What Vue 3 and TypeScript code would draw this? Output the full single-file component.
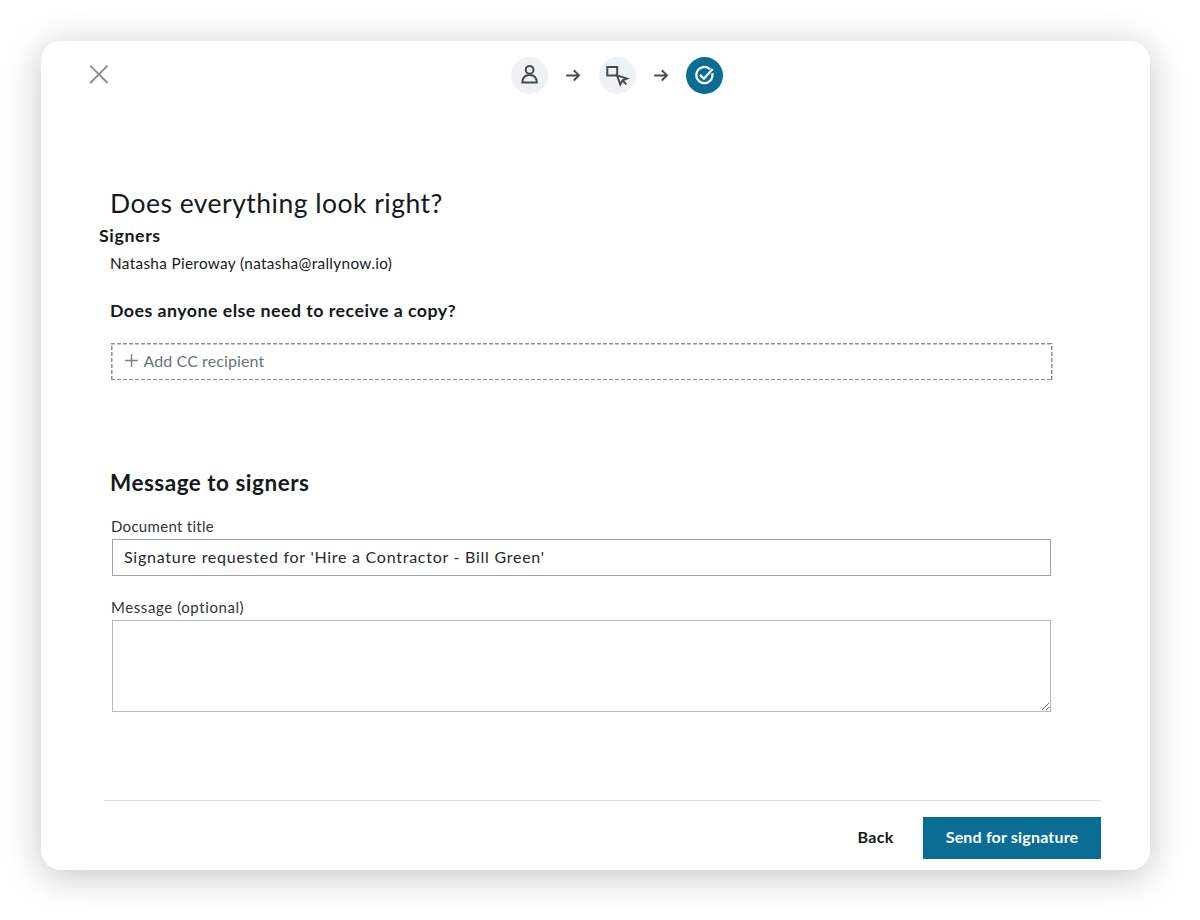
<script setup lang="ts">
import { ref } from 'vue'

const signers = ref([{ name: 'Natasha Pieroway', email: 'natasha@rallynow.io' }])
const documentTitle = ref("Signature requested for 'Hire a Contractor - Bill Green'")
const message = ref('')
</script>

<template>
  <div class="page">
    <main class="dialog">
      <header class="topbar">
        <button class="close" aria-label="Close">
          <svg width="20" height="20" viewBox="0 0 20 20"><path d="M1.2 1.6 18.6 19M18.6 1.6 1.2 19" /></svg>
        </button>
        <div class="steps">
          <span class="step">
            <svg width="37" height="37" viewBox="0 0 37 37">
              <circle cx="18.6" cy="12.8" r="3.9" />
              <path d="M11.4 25.6C11.4 20.6 14.2 17.9 18.6 17.9S25.8 20.6 25.8 25.6Z" />
            </svg>
          </span>
          <svg class="arrow" width="14" height="14" viewBox="0 0 14 14"><path d="M.2 7.4H13M7.8 2.3 13 7.4 7.8 12.5" /></svg>
          <span class="step">
            <svg width="37" height="37" viewBox="0 0 37 37">
              <path d="M18.2 18.5H8.3V10H18.2V18.5Z" />
              <path d="M18 18.4 28 21.6 23.6 23.4 21.3 27.4ZM23.6 23.4 27.3 27.4" />
            </svg>
          </span>
          <svg class="arrow" width="14" height="14" viewBox="0 0 14 14"><path d="M.2 7.4H13M7.8 2.3 13 7.4 7.8 12.5" /></svg>
          <span class="step active">
            <svg width="37" height="37" viewBox="0 0 37 37">
              <path d="M24 12.2A8.1 8.1 0 1 0 26.3 16.3" />
              <path d="M14.1 17.9 17.9 21.7 26.6 11.9" />
            </svg>
          </span>
        </div>
      </header>

      <section class="content">
        <h1>Does everything look right?</h1>
        <h3 class="signers-title">Signers</h3>
        <p v-for="s in signers" :key="s.email" class="signer">{{ s.name }} ({{ s.email }})</p>
        <h3 class="copy-title">Does anyone else need to receive a copy?</h3>
        <button class="add-cc">
          <svg width="13" height="13" viewBox="0 0 13 13"><path d="M6.5 0V13M0 6.5H13" /></svg>
          <span>Add CC recipient</span>
        </button>
        <h2>Message to signers</h2>
        <div class="fields">
          <label class="title-label" for="title">Document title</label>
          <input id="title" v-model="documentTitle" type="text" />
          <label class="message-label" for="message">Message (optional)</label>
          <textarea id="message" v-model="message"></textarea>
        </div>
      </section>

      <footer>
        <button class="back">Back</button>
        <button class="send">Send for signature</button>
      </footer>
    </main>
  </div>
</template>

<style>
body { margin: 0; background: #fff; }
</style>

<style scoped>
* { box-sizing: border-box; }
.page { width: 1200px; height: 920px; padding: 41px 50px 50px 41px; background: #fff; overflow: hidden; font-family: Lato, "Open Sans", sans-serif; font-variant-ligatures: none; color: #15191c; }
.dialog { width: 1109px; height: 829px; display: flex; flex-direction: column; background: #fff; border-radius: 20px; box-shadow: 0 6px 36px rgba(0, 0, 0, .23); }
button { border: 0; background: none; padding: 0; font: inherit; color: inherit; letter-spacing: inherit; }
h1, h2, h3, p { margin: 0; white-space: nowrap; }
svg { display: block; fill: none; flex: none; }
.topbar { display: flex; height: 146px; padding: 16px 0 0 48px; align-items: flex-start; }
.close { width: 20px; height: 20px; margin-top: 7px; }
.close svg { stroke: #87919c; stroke-width: 2; }
.steps { display: flex; align-items: center; margin-left: 402px; }
.step { width: 37px; height: 37px; border-radius: 50%; background: #eef2f5; }
.step svg { stroke: #454c50; stroke-width: 2; }
.step.active { background: #0a6e94; }
.step.active svg { stroke: #fff; stroke-width: 2.2; }
.arrow { margin: 0 18.5px 1px 18px; stroke: #454c50; stroke-width: 2; }
.content { display: flex; flex-direction: column; padding-left: 69px; }
h1 { height: 32px; font-size: 26.5px; line-height: 32px; font-weight: 400; letter-spacing: .48px; }
.signers-title, .copy-title { height: 24px; font-size: 17.8px; line-height: 24px; font-weight: 700; letter-spacing: .46px; }
.signers-title { margin: 4px 0 0 -11px; letter-spacing: .6px; }
.signer { height: 22px; margin-top: 5px; font-size: 15.3px; line-height: 22px; letter-spacing: .34px; }
.copy-title { margin-top: 24px; }
.add-cc {
  --dash: #89929a;
  display: flex; align-items: center; gap: 5.5px; width: 942px; height: 37px; margin: 21px 0 0 .5px; padding: 0 0 2px 14.5px;
  color: #68737c; font-size: 16px; letter-spacing: .1px;
  background:
    repeating-linear-gradient(90deg, var(--dash) 0 4px, transparent 4px 6px) 0 0 / 100% 1.5px no-repeat,
    repeating-linear-gradient(90deg, var(--dash) 0 4px, transparent 4px 6px) 0 100% / 100% 1.5px no-repeat,
    repeating-linear-gradient(0deg, var(--dash) 0 4px, transparent 4px 6px) 0 0 / 1.5px 100% no-repeat,
    repeating-linear-gradient(0deg, var(--dash) 0 4px, transparent 4px 6px) 100% 0 / 1.5px 100% no-repeat;
}
.add-cc svg { stroke: #76818a; stroke-width: 1.4; }
h2 { height: 30px; margin-top: 88px; font-size: 22.5px; line-height: 30px; font-weight: 700; letter-spacing: .5px; }
.fields { display: flex; flex-direction: column; width: 940px; margin: 18px 0 0 1px; }
label { height: 20px; font-size: 15px; line-height: 20px; letter-spacing: .3px; color: #303539; }
input { width: 939px; height: 37px; margin: 3px 0 0 1px; padding: 0 11px 3px; border: 1px solid #96a3af; border-radius: 0; background: #fff; font: 400 16px Lato, sans-serif; color: #25292c; letter-spacing: .74px; outline: 0; }
.message-label { margin-top: 21px; letter-spacing: .58px; }
textarea { width: 939px; height: 92px; margin: 3px 0 0 1px; padding: 8px 11px; border: 1px solid #b4b9bd; border-radius: 0; background: #fff; font: 400 16px Lato, sans-serif; resize: vertical; outline: 0; }
footer { display: flex; justify-content: flex-end; width: 997px; height: 59px; margin: auto 0 11px 63px; padding-top: 16px; border-top: 1px solid #d8dfe8; font-size: 16px; font-weight: 700; }
footer button { padding-bottom: 3px; }
.back { width: 37px; height: 42px; margin-right: 29px; letter-spacing: .3px; }
.send { width: 178px; height: 42px; background: #0a6e94; color: #fff; letter-spacing: .18px; }
</style>
